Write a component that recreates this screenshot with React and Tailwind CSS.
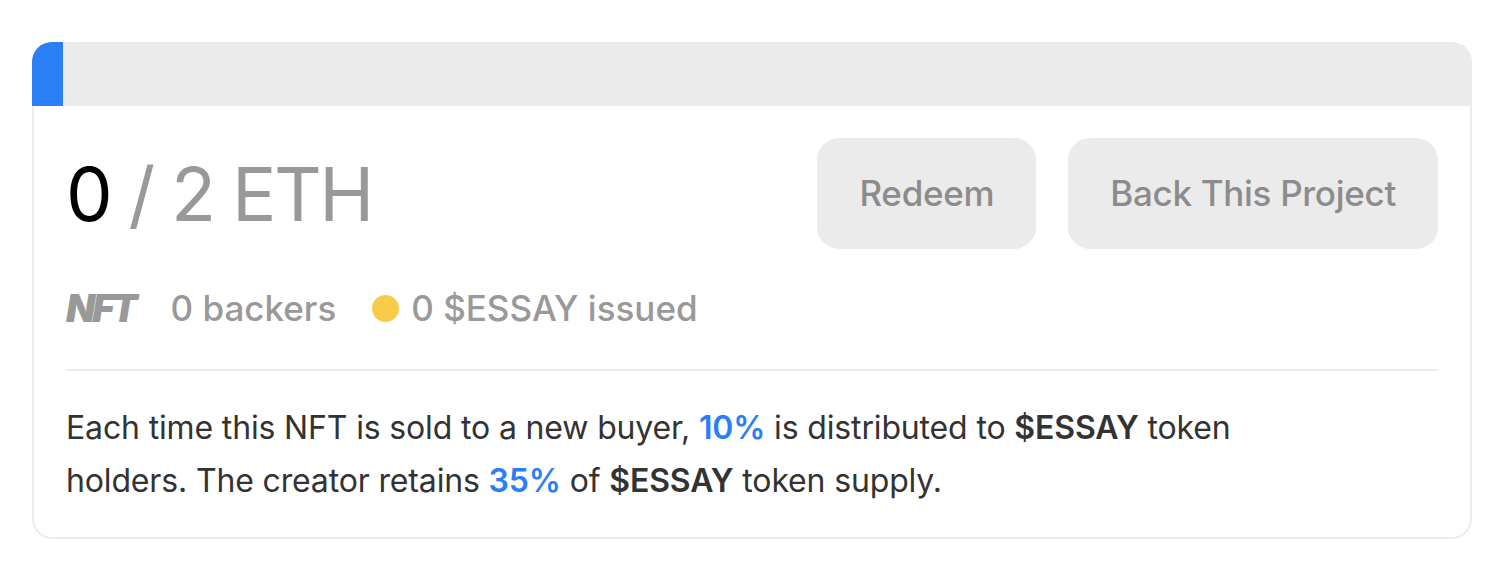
import React from 'react';

function App() {
  return (
    <div className="min-h-screen bg-white pt-[42px] px-[32px] font-['Inter',sans-serif]">
      <div className="w-[1440px] rounded-[20px] overflow-hidden">
        <div className="h-[64px] bg-[#ebebeb] flex">
          <div className="w-[31px] h-full bg-[#2a7ef6]"></div>
        </div>
        <div className="border-2 border-t-0 border-[#ebebeb] rounded-b-[20px] px-[32px] pt-[32px] pb-[30px]">
          <div className="flex items-center justify-between">
            <div className="text-[74px] leading-none tracking-[-2.5px]">
              <span className="text-black">0</span>
              <span className="text-[#999999]"> / 2 ETH</span>
            </div>
            <div className="flex gap-[32px]">
              <button className="h-[111px] px-[42px] rounded-[22px] bg-[#ebebeb] text-[#8c8c8c] text-[35px] font-medium tracking-[-0.3px]">
                Redeem
              </button>
              <button className="h-[111px] px-[42px] rounded-[22px] bg-[#ebebeb] text-[#8c8c8c] text-[35px] font-medium tracking-[-0.3px]">
                Back This Project
              </button>
            </div>
          </div>

          <div className="flex items-center mt-[34px] text-[35px] leading-[51px] font-medium text-[#999999]">
            <span className="italic font-black tracking-[-3px] text-[38px] text-[#999999]">NFT</span>
            <span className="ml-[36px]">0 backers</span>
            <span className="ml-[36px] w-[27px] h-[27px] rounded-full bg-[#f8cc46]"></span>
            <span className="ml-[12px]">0 $ESSAY issued</span>
          </div>

          <div className="h-[2px] bg-[#ebebeb] mt-[35px]"></div>

          <p className="mt-[30px] max-w-[1200px] text-[32px] leading-[53px] tracking-[-0.15px] text-[#333333]">
            Each time this NFT is sold to a new buyer,{' '}
            <span className="text-[#2a7ef6] font-semibold">10%</span> is distributed to{' '}
            <span className="font-semibold">$ESSAY</span> token holders. The creator retains{' '}
            <span className="text-[#2a7ef6] font-semibold">35%</span> of{' '}
            <span className="font-semibold">$ESSAY</span> token supply.
          </p>
        </div>
      </div>
    </div>
  );
}

export default App;
